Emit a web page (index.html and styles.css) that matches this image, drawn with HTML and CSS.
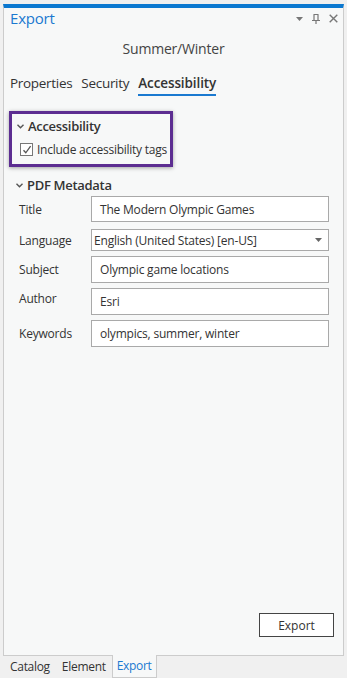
FILE: index.html
```html
<!DOCTYPE html>
<html lang="en">
<head>
    <meta charset="UTF-8">
    <meta name="viewport" content="width=device-width, initial-scale=1.0">
    <title>Export</title>
    <link rel="stylesheet" href="styles.css">
</head>
<body>

<div class="pane">
    <div class="pane-header">
        <h1 class="pane-title">Export</h1>
        <div class="pane-tools">
            <svg width="7" height="4" viewBox="0 0 7 4"><path d="M0 0 L7 0 L3.5 4 Z" fill="#777"/></svg>
            <svg width="8" height="10" viewBox="0 0 8 10"><path d="M1.5 0.5 H6.5 M2 0.5 V6 M6 0.5 V6 M0 6.5 H8 M4 6.5 V10" stroke="#777" stroke-width="1.2" fill="none"/></svg>
            <svg width="9" height="9" viewBox="0 0 9 9"><path d="M0.7 0.7 L8.3 8.3 M8.3 0.7 L0.7 8.3" stroke="#777" stroke-width="1.4"/></svg>
        </div>
    </div>

    <div class="map-name">Summer/Winter</div>

    <div class="tabs">
        <span class="tab">Properties</span>
        <span class="tab">Security</span>
        <span class="tab active">Accessibility</span>
    </div>

    <div class="highlight">
        <div class="section-head">
            <svg class="chevron" width="7" height="5" viewBox="0 0 7 5"><path d="M0.5 0.8 L3.5 3.8 L6.5 0.8" stroke="#555" stroke-width="1.4" fill="none"/></svg>
            Accessibility
        </div>
        <label class="check-row">
            <span class="checkbox">
                <svg width="10" height="10" viewBox="0 0 10 10"><path d="M1.5 5.2 L3.8 7.8 L8.6 1.2" stroke="#555" stroke-width="1.3" fill="none"/></svg>
            </span>
            Include accessibility tags
        </label>
    </div>

    <div class="section-head metadata-head">
        <svg class="chevron" width="7" height="5" viewBox="0 0 7 5"><path d="M0.5 0.8 L3.5 3.8 L6.5 0.8" stroke="#555" stroke-width="1.4" fill="none"/></svg>
        PDF Metadata
    </div>

    <div class="fields">
        <div class="field">
            <span class="field-label">Title</span>
            <div class="input">The Modern Olympic Games</div>
        </div>
        <div class="field field-select">
            <span class="field-label">Language</span>
            <div class="input select">
                English (United States) [en-US]
                <svg width="7" height="4" viewBox="0 0 7 4"><path d="M0 0 H7 L3.5 4 Z" fill="#666"/></svg>
            </div>
        </div>
        <div class="field">
            <span class="field-label">Subject</span>
            <div class="input">Olympic game locations</div>
        </div>
        <div class="field field-author">
            <span class="field-label">Author</span>
            <div class="input">Esri</div>
        </div>
        <div class="field">
            <span class="field-label">Keywords</span>
            <div class="input">olympics, summer, winter</div>
        </div>
    </div>

    <div class="pane-footer">
        <button class="btn">Export</button>
    </div>
</div>

<div class="dock-tabs">
    <span class="dock-tab">Catalog</span>
    <span class="dock-tab">Element</span>
    <span class="dock-tab active">Export</span>
</div>

</body>
</html>
```

FILE: styles.css
```css
:root {
    --page-color: #f0f0f0;
    --pane-color: #f7f8f8;
    --pane-border: #cccccc;
    --accent: #1a79d0;
    --text-color: #333;
    --input-border: #a9a9a9;
    --highlight: #5c2d91;
}

html, body {
    margin: 0;
    height: 100%;
}

body {
    display: flex;
    flex-direction: column;
    background-color: var(--page-color);
    color: var(--text-color);
    font-family: "Open Sans", "Noto Sans", sans-serif;
    font-size: 12px;
}

.pane {
    flex: 1;
    display: flex;
    flex-direction: column;
    margin: 4px 3px 0 3px;
    border: 1px solid var(--pane-border);
    border-top: 4px solid #0b78d0;
    background-color: var(--pane-color);
}

.pane-header {
    display: flex;
    align-items: center;
    justify-content: space-between;
    height: 20px;
    padding: 0 5px 0 6px;
}

.pane-title {
    margin: 0;
    font-size: 15px;
    font-weight: 400;
    color: var(--accent);
    letter-spacing: -0.2px;
}

.pane-tools {
    display: flex;
    align-items: center;
    gap: 9px;
    padding-top: 1px;
}

.map-name {
    margin-top: 11px;
    text-align: center;
    font-size: 14px;
    color: #444;
    letter-spacing: -0.2px;
}

.tabs {
    display: flex;
    gap: 9px;
    margin-top: 16px;
    padding-left: 6px;
    font-size: 13.5px;
    letter-spacing: -0.3px;
}

.tab {
    padding-bottom: 2px;
    border-bottom: 2px solid transparent;
}

.tab.active {
    font-weight: 600;
    letter-spacing: -0.1px;
    border-bottom-color: var(--accent);
}

.highlight {
    align-self: flex-start;
    margin: 15px 0 0 5px;
    padding: 3px 3px 6px 2px;
    border: 3px solid var(--highlight);
    box-shadow: 0 1px 4px rgba(0, 0, 0, 0.35);
}

.section-head {
    display: flex;
    align-items: center;
    gap: 4px;
    font-size: 13px;
    font-weight: 600;
    letter-spacing: -0.3px;
    padding-left: 3px;
}

.metadata-head {
    margin: 9px 0 0 9px;
}

.check-row {
    display: flex;
    align-items: center;
    gap: 4px;
    margin-top: 6px;
    padding-left: 6px;
    font-size: 12px;
    letter-spacing: -0.25px;
}

.checkbox {
    display: flex;
    align-items: center;
    justify-content: center;
    width: 11px;
    height: 11px;
    border: 1px solid #777;
    background-color: #fff;
}

.fields {
    display: flex;
    flex-direction: column;
    gap: 5px;
    margin: 2px 14px 0 15px;
}

.field {
    display: flex;
    align-items: center;
}

.field-label {
    width: 72px;
    font-size: 12px;
    letter-spacing: -0.2px;
}

.field-author .field-label {
    align-self: flex-start;
    padding-top: 2px;
}

.input {
    flex: 1;
    box-sizing: border-box;
    height: 27px;
    padding: 0 8px;
    display: flex;
    align-items: center;
    border: 1px solid var(--input-border);
    background-color: #fff;
    font-size: 12px;
    letter-spacing: -0.2px;
}

.field:first-child .input {
    height: 26px;
}

.field-select {
    margin-top: 2px;
}

.input.select {
    height: 22px;
    padding: 0 6px 0 2px;
    justify-content: space-between;
}

.pane-footer {
    margin-top: auto;
    display: flex;
    justify-content: flex-end;
    padding: 0 9px 18px 0;
}

.btn {
    width: 75px;
    height: 24px;
    border: 1px solid #444;
    background-color: #fff;
    color: var(--text-color);
    font-family: inherit;
    font-size: 12px;
}

.dock-tabs {
    display: flex;
    height: 22px;
    padding-left: 4px;
}

.dock-tab {
    display: flex;
    align-items: center;
    padding: 0 6px 1px;
    font-size: 12px;
    letter-spacing: -0.3px;
}

.dock-tab.active {
    color: var(--accent);
    margin-top: -1px;
    padding: 0 4px 1px;
    background-color: var(--pane-color);
    border: 1px solid var(--pane-border);
    border-top: none;
}
```
